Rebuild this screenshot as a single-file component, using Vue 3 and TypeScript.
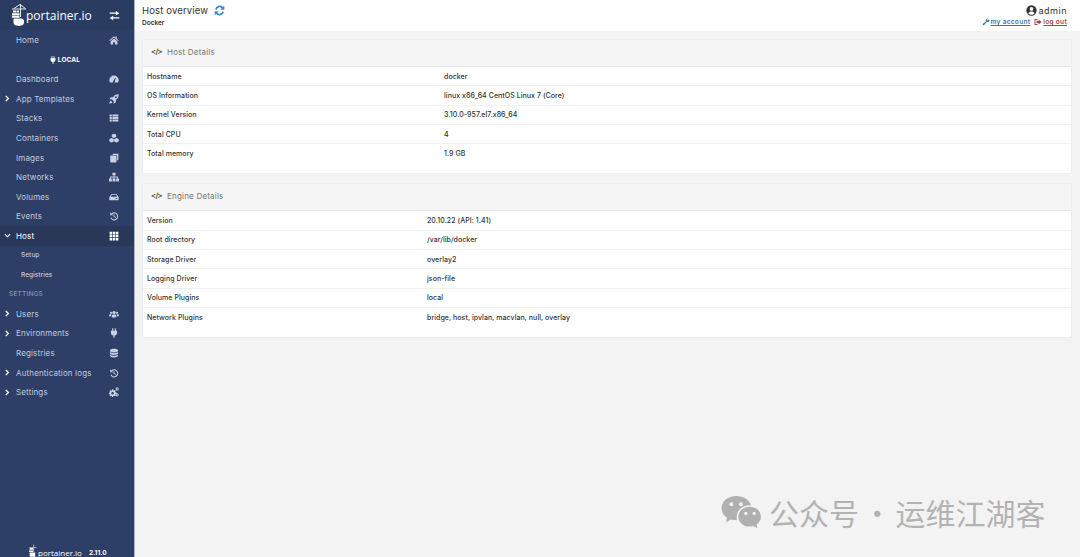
<script setup lang="ts">
interface NavItem { label: string; icon?: string; caret?: 'right' | 'down'; kind?: string }
const icons: Record<string, string> = {
  home: 'M8 2 0.500 8.500l1 1L8 4l6.500 5.500 1-1L12.500 6V2.500h-2V4.300zM2.500 10.500V15h4v-3.500h3V15h4v-4.500L8 5.500z',
  gauge: 'M8 2.500a7.500 7.500 0 0 0-7.500 7.500c0 1.500.4 2.800 1 3.500h13c.6-.7 1-2 1-3.500A7.500 7.500 0 0 0 8 2.500zm-.8 8.300 2.600-5 1.200.5-1.800 5.200a1.500 1.500 0 1 1-2-.7z',
  rocket: 'M15.500 .5c-4.500 0-7 1.500-9 4.500H3L.5 8.500h3.800l3.200 3.200V15.500l3.500-2.500V9.500c3-2 4.500-4.500 4.500-9zM11 3.500a1.500 1.500 0 1 1 0 3 1.500 1.500 0 0 1 0-3zM2.500 10.500C1.300 11.700.7 14 .5 15.500c1.500-.2 3.800-.8 5-2z',
  list: 'M1 2.500h3.500v3H1zM5.500 2.500H15v3H5.500zM1 6.500h3.500v3H1zM5.500 6.500H15v3H5.500zM1 10.500h3.500v3H1zM5.500 10.500H15v3H5.500z',
  cubes: 'M8 1 11.500 2.500v4L8 8 4.500 6.500v-4zM4.200 8 7.700 9.500v4l-3.500 1.500L.5 13.500v-4zM11.800 8l3.700 1.500v4L11.800 15l-3.500-1.500v-4z',
  clone: 'M6 1h9v10.500h-2V5a2 2 0 0 0-2-2H6zM3 4h8a1 1 0 0 1 1 1v9a1 1 0 0 1-1 1H3a1 1 0 0 1-1-1V5a1 1 0 0 1 1-1z',
  sitemap: 'M5.500 1h5v4H8.700v2.300H14.300V10.500H16V15h-4.500v-4.500H13V8.700H8.700v1.800H10.300V15H5.700v-4.500H7.300V8.700H3v1.800H4.500V15H0v-4.500H1.700V7.300H7.300V5H5.500z',
  hdd: 'M4 3h8l3.500 5.500V13H.5V8.500zM4.600 4.300 3 7.500h10l-1.600-3.200zM10.500 9.800v1.400h3V9.800z',
  history: 'M2 2v4.700h4.700L5 5a4.700 4.700 0 1 1-1.100 5.500l-1.600.8A6.500 6.500 0 1 0 3.800 3.800zM7.300 5h1.500v3.300l2.300 1.300-.8 1.200-3-1.800z',
  grid: 'M1 1h4v4H1zM6 1h4v4H6zM11 1h4v4h-4zM1 6h4v4H1zM6 6h4v4H6zM11 6h4v4h-4zM1 11h4v4H1zM6 11h4v4H6zM11 11h4v4h-4z',
  users: 'M8 3a2.700 2.700 0 1 1 0 5.400A2.700 2.700 0 0 1 8 3zM3.300 4.200a1.800 1.800 0 1 1 0 3.600 1.800 1.800 0 0 1 0-3.600zM12.700 4.200a1.800 1.800 0 1 1 0 3.600 1.800 1.800 0 0 1 0-3.600zM4.300 13.500V11.200c0-1.700 1-2.500 2.200-2.500h3c1.200 0 2.200.8 2.200 2.500v2.300zM0 11.500V10c0-1 1-1.700 2-1.700h2c-.6.700-.9 1.700-.9 3.200zM16 11.500V10c0-1-1-1.700-2-1.700h-2c.6.700.9 1.700.9 3.200z',
  plug: 'M5 .5h1.800v4h2.400v-4H11v4h2v3c0 2.500-1.500 4.200-4 4.600v3.400H7v-3.400c-2.500-.4-4-2.100-4-4.600v-3h2z',
  db: 'M8 1c3.500 0 6.500 1 6.500 2.500v1C14.500 6 11.500 7 8 7S1.500 6 1.500 4.500v-1C1.500 2 4.500 1 8 1zM1.500 6.500C3 7.800 5.500 8.300 8 8.300s5-.5 6.500-1.800v2.300C14.500 10 11.500 11 8 11S1.500 10 1.500 8.800zM1.500 10.700C3 12 5.500 12.500 8 12.500s5-.5 6.500-1.800v1.800C14.500 14 11.500 15 8 15s-6.500-1-6.500-2.500z',
  cogs: 'M4.800 3.500h1.900l.3 1.500 1.200.5 1.300-.8 1.300 1.300-.8 1.300.5 1.200 1.500.3v1.900l-1.500.3-.5 1.200.8 1.300-1.300 1.300-1.300-.8-1.200.5-.3 1.500H4.800l-.3-1.500-1.200-.5-1.300.8-1.300-1.300.8-1.300-.5-1.200L-.5 11V9.100L1 8.800l.5-1.200-.8-1.300L2 5l1.300.8 1.200-.5zM5.700 8a2 2 0 1 0 0 4 2 2 0 0 0 0-4zM13 .5a2.500 2.500 0 1 1 0 5 2.500 2.500 0 0 1 0-5zm0 1.600a.9.900 0 1 0 0 1.800.9.900 0 0 0 0-1.800zM13 10a2.500 2.500 0 1 1 0 5 2.500 2.500 0 0 1 0-5zm0 1.600a.9.900 0 1 0 0 1.800.9.900 0 0 0 0-1.800z',
}
const nav: NavItem[] = [
  { label: 'Home', icon: 'home' },
  { label: 'LOCAL', kind: 'endpoint' },
  { label: 'Dashboard', icon: 'gauge' },
  { label: 'App Templates', icon: 'rocket', caret: 'right' },
  { label: 'Stacks', icon: 'list' },
  { label: 'Containers', icon: 'cubes' },
  { label: 'Images', icon: 'clone' },
  { label: 'Networks', icon: 'sitemap' },
  { label: 'Volumes', icon: 'hdd' },
  { label: 'Events', icon: 'history' },
  { label: 'Host', icon: 'grid', caret: 'down', kind: 'active' },
  { label: 'Setup', kind: 'sub' },
  { label: 'Registries', kind: 'sub' },
  { label: 'SETTINGS', kind: 'section' },
  { label: 'Users', icon: 'users', caret: 'right' },
  { label: 'Environments', icon: 'plug', caret: 'right' },
  { label: 'Registries', icon: 'db' },
  { label: 'Authentication logs', icon: 'history', caret: 'right' },
  { label: 'Settings', icon: 'cogs', caret: 'right' },
]
const hostRows = [
  ['Hostname', 'docker'],
  ['OS Information', 'linux x86_64 CentOS Linux 7 (Core)'],
  ['Kernel Version', '3.10.0-957.el7.x86_64'],
  ['Total CPU', '4'],
  ['Total memory', '1.9 GB'],
]
const engineRows = [
  ['Version', '20.10.22 (API: 1.41)'],
  ['Root directory', '/var/lib/docker'],
  ['Storage Driver', 'overlay2'],
  ['Logging Driver', 'json-file'],
  ['Volume Plugins', 'local'],
  ['Network Plugins', 'bridge, host, ipvlan, macvlan, null, overlay'],
]
</script>

<template>
  <div class="app">
    <aside class="side">
      <div class="brand">
        <svg class="logo" viewBox="0 0 14 24" width="14" height="24">
          <path fill="none" stroke="#fff" stroke-width=".9" d="M2 5.500 8 1.500l5.500 4M0 6h14M8.500 1v13" />
          <path fill="#fff" d="M1 7.500h3v2H1zM4.500 7.500h2.500v2H4.500zM0 10.200h7.500v2H0zM0 12.800h7.500v2H0zM2 15.500h6.500a3 3 0 0 1 3.500 3.500c0 2.500-1.500 3.500-3 3.500-1 .6-3 .6-4 0-2 .3-3.500-1-3.500-3.200 0-1.800-.5-3 .5-3.800z" />
        </svg>
        <span class="brand-name">portainer.io</span>
        <svg class="swap" viewBox="0 0 16 16" width="11" height="11">
          <path fill="#fff" d="M1 3.500h9V1.500l5 3.200-5 3.200V5.500H1zM15 10.500H6V8.500l-5 3.200 5 3.200v-2.400h9z" />
        </svg>
      </div>
      <nav class="nav">
        <div v-for="(item, i) in nav" :key="i" class="item" :class="item.kind">
          <template v-if="item.kind === 'endpoint'">
            <svg viewBox="0 0 16 16" width="8" height="8"><path fill="#fff" :d="icons.plug" /></svg>
            <span>{{ item.label }}</span>
          </template>
          <template v-else>
            <span class="caret">
              <svg v-if="item.caret === 'right'" viewBox="0 0 8 8" width="7" height="7"><path fill="none" stroke="#fff" stroke-width="1.600" d="m2 1 3 3-3 3" /></svg>
              <svg v-if="item.caret === 'down'" viewBox="0 0 8 8" width="7" height="7"><path fill="none" stroke="#fff" stroke-width="1.300" d="m1 2.500 3 3 3-3" /></svg>
            </span>
            <span class="label">{{ item.label }}</span>
            <svg v-if="item.icon" class="icon" viewBox="0 0 16 16" width="10" height="10"><path :d="icons[item.icon]" fill-rule="evenodd" /></svg>
          </template>
        </div>
      </nav>
      <div class="foot">
        <svg viewBox="0 0 14 24" width="8" height="13">
          <path fill="#fff" d="M8 1h1v13H8zM0 5.500h14v.9H0zM1 7.500h6v2H1zM0 10.200h7.500v2H0zM0 12.800h7.500v2H0zM1 15.500h10v8H1z" />
        </svg>
        <span class="foot-name">portainer.io</span>
        <span class="foot-ver">2.11.0</span>
      </div>
    </aside>
    <div class="main">
      <header class="top">
        <div class="crumbs">
          <div class="title-line">
            <span class="page-title">Host overview</span>
            <svg viewBox="0 0 16 16" width="11" height="11"><path fill="#3a87cf" d="M15 1v6H9l2.200-2.200A4.200 4.200 0 0 0 4 6.800L1.500 6A6.800 6.800 0 0 1 13 3zM1 15V9h6l-2.200 2.200A4.200 4.200 0 0 0 12 9.200l2.500.8A6.800 6.800 0 0 1 3 13z" /></svg>
          </div>
          <div class="sub-title">Docker</div>
        </div>
        <div class="account">
          <div class="user">
            <svg viewBox="0 0 16 16" width="11" height="11"><path fill="#333" fill-rule="evenodd" d="M8 .5a7.500 7.500 0 1 1 0 15A7.500 7.500 0 0 1 8 .5zm0 2.500a2.700 2.700 0 1 0 0 5.400A2.700 2.700 0 0 0 8 3zM3.500 12.200a5.800 5.800 0 0 0 9 0C11.800 10.200 10 9.500 8 9.500s-3.800.7-4.500 2.700z" /></svg>
            <span>admin</span>
          </div>
          <div class="links">
            <svg viewBox="0 0 16 16" width="8" height="8"><path fill="#337ab7" d="M15 4a4 4 0 0 1-5.500 3.700L3.500 15 1 12.500l7-6A4 4 0 0 1 12 1l-2 2.500L11 5l2.500-1.800z" /></svg>
            <a class="acc">my account</a>
            <svg viewBox="0 0 16 16" width="8" height="8"><path fill="#a94442" d="M7 2H1v12h6v-2H3V4h4zM9 3v3H5v4h4v3l6.500-5z" /></svg>
            <a class="out">log out</a>
          </div>
        </div>
      </header>
      <section class="content">
        <article class="panel">
          <h3 class="panel-head"><span class="code">&lt;/&gt;</span>Host Details</h3>
          <div class="rows host">
            <div v-for="row in hostRows" :key="row[0]" class="row"><span>{{ row[0] }}</span><span>{{ row[1] }}</span></div>
          </div>
        </article>
        <article class="panel">
          <h3 class="panel-head"><span class="code">&lt;/&gt;</span>Engine Details</h3>
          <div class="rows engine">
            <div v-for="row in engineRows" :key="row[0]" class="row"><span>{{ row[0] }}</span><span>{{ row[1] }}</span></div>
          </div>
        </article>
      </section>
      <div class="watermark">
        <svg viewBox="0 0 42 36" width="42" height="35">
          <path fill="#b0b0b0" d="M16 1C7.500 1 1 6.500 1 13.500c0 4 2.200 7.500 5.700 9.800L5.500 28l5.200-2.800c1.700.5 3.500.8 5.300.8h1a11 11 0 0 1-.5-3.500c0-7 6.300-12 13.800-12h1C29.700 5 23.500 1 16 1z" />
          <path fill="#b0b0b0" d="M30 12c-6.500 0-11.700 4.500-11.700 10.300S23.500 32.500 30 32.500c1.400 0 2.700-.2 4-.6l4 2.500-1-4c2.800-2 4.500-5 4.500-7.800C41.500 16.500 36.500 12 30 12z" />
          <g fill="#f3f3f3"><circle cx="11" cy="9.500" r="2" /><circle cx="21" cy="9.500" r="2" /><circle cx="26" cy="19" r="1.700" /><circle cx="34.500" cy="19" r="1.700" /></g>
        </svg>
        <span class="wm-text">公众号 · 运维江湖客</span>
      </div>
    </div>
  </div>
</template>

<style scoped>
.app { display: flex; height: 557px; width: 1080px; overflow: hidden; font-family: "Inter", "Open Sans", sans-serif; background: #f3f3f3; color: #333; position: relative; }
.side { width: 134px; flex: none; background: #2d3e67; display: flex; flex-direction: column; color: #c3cbde; border-right: 1px solid #aab2cc; overflow: hidden; }
.brand { height: 30px; background: #2b3c62; display: flex; align-items: center; padding-left: 12px; flex: none; }
.logo { flex: none; }
.brand-name { font-family: "Open Sans", sans-serif; font-size: 12px; color: #fff; width: 83px; flex: none; }
.nav { padding-top: .5px; flex: 1; }
.item { height: 19.55px; display: flex; align-items: center; font-size: 8px; letter-spacing: .14px; padding-right: 15px; }
.caret { width: 16px; flex: none; padding-left: 4px; display: flex; align-items: center; box-sizing: border-box; }
.label { flex: 1; }
.icon { fill: #c9d0e2; flex: none; }
.active { background: #293859; color: #fff; }
.active .icon { fill: #fff; }
.sub { font-size: 6.500px; padding-left: 5px; font-weight: 500; letter-spacing: .05px; }
.endpoint { justify-content: center; gap: 1px; color: #fff; font-size: 6.500px; font-weight: 700; padding: 0 5px 0 0; }
.section { font-size: 6.500px; color: #8595bd; font-weight: 500; letter-spacing: .2px; }
.section .caret { width: 9px; }
.foot { height: 14px; flex: none; display: flex; align-items: flex-end; padding-left: 29px; color: #fff; }
.foot-name { font-family: "Open Sans", sans-serif; font-size: 8px; margin-left: 1px; line-height: 8px; }
.foot-ver { font-size: 6.500px; font-weight: 700; margin-left: 7px; line-height: 8px; }
.main { flex: 1; min-width: 0; display: flex; flex-direction: column; position: relative; }
.top { height: 31px; flex: none; background: #fff; display: flex; justify-content: space-between; padding: 4px 13px 0 7px; box-sizing: border-box; }
.title-line { display: flex; align-items: center; gap: 6px; height: 13px; }
.page-title { font-size: 9.500px; letter-spacing: .15px; color: #333; }
.sub-title { font-size: 6.500px; font-weight: 600; margin-top: 2px; }
.account { display: flex; flex-direction: column; align-items: flex-end; }
.user { display: flex; align-items: center; gap: 2px; height: 13px; font-size: 9px; letter-spacing: .5px; }
.links { display: flex; align-items: center; gap: 1px; font-size: 6.500px; font-weight: 600; margin-top: 1px; letter-spacing: .3px; }
.acc { color: #337ab7; text-decoration: underline; margin-right: 3px; }
.out { color: #a94442; text-decoration: underline; }
.content { padding: 8px 8px 0 7px; display: flex; flex-direction: column; gap: 9px; }
.panel { background: #fff; border: 1px solid #eee; box-sizing: border-box; }
.panel-head { margin: 0; height: 23px; background: #f5f5f5; border-bottom: 1px solid #e8e8e8; display: flex; align-items: center; font-size: 8px; font-weight: 400; letter-spacing: .2px; color: #767676; padding: 0 0 3px 8px; }
.code { font-size: 7.500px; font-weight: 700; margin-right: 5px; color: #555; letter-spacing: -.7px; }
.rows { padding-bottom: 10px; }
.row { height: 19.300px; display: grid; align-items: center; padding-left: 4px; font-size: 7px; letter-spacing: .06px; font-weight: 500; color: #333; border-bottom: 1px solid #f0f0f0; box-sizing: border-box; }
.row:last-child { border-bottom: 0; }
.host .row { grid-template-columns: 297px 1fr; }
.engine .row { grid-template-columns: 280px 1fr; }
.watermark { position: absolute; left: 585px; top: 494px; display: flex; align-items: center; gap: 7px; }
.wm-text { font-family: "Noto Sans CJK SC", sans-serif; font-size: 30px; color: #b3b3b3; line-height: 36px; white-space: nowrap; word-spacing: -3.500px; }
</style>
